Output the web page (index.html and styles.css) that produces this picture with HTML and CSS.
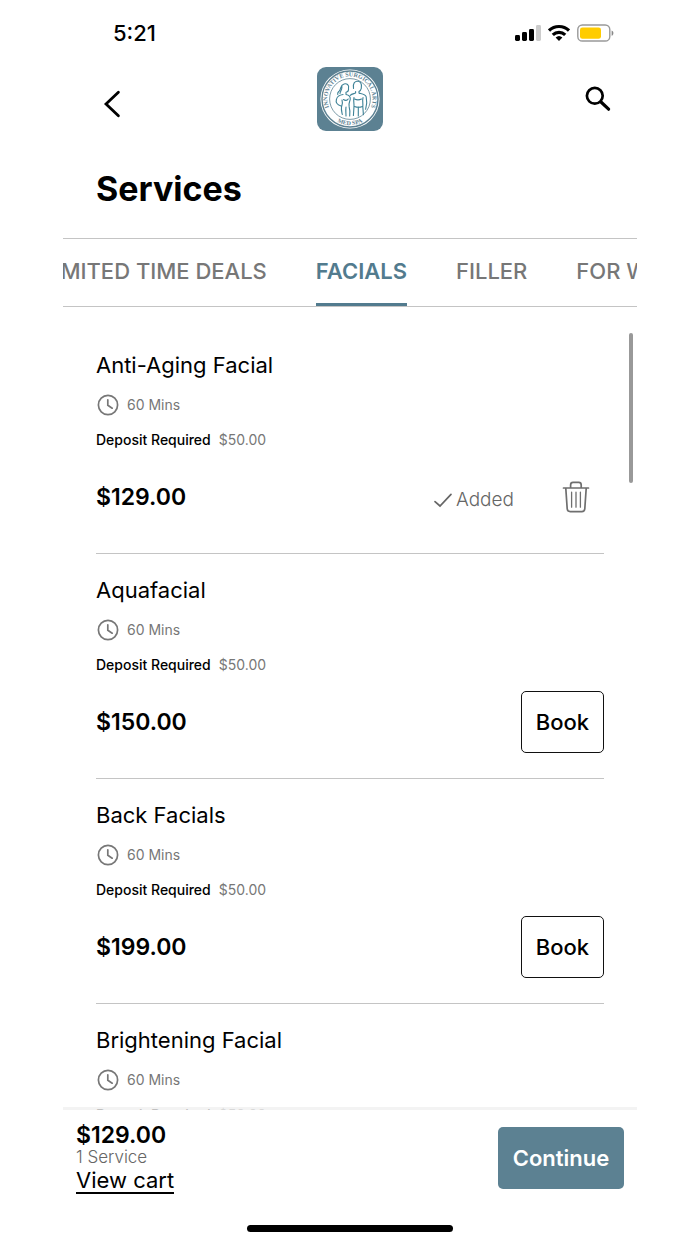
FILE: index.html
```html
<!DOCTYPE html>
<html lang="en">
<head>
<meta charset="utf-8">
<meta name="viewport" content="width=device-width, initial-scale=1">
<title>Services</title>
<link rel="stylesheet" href="styles.css">
</head>
<body>
<svg class="sprite" aria-hidden="true">
  <symbol id="clock" viewBox="0 0 22 22"><g fill="none" stroke="#777" stroke-width="1.7" stroke-linecap="round"><circle cx="11" cy="11" r="9.6"/><path d="M10.8 5.8v5.4l4.4 3"/></g></symbol>
</svg>
<div class="app">
  <div class="status">
    <span class="time">5:21</span>
    <div class="signals">
      <svg width="26" height="18" viewBox="0 0 26 18" aria-hidden="true"><rect x="0" y="11" width="5" height="6" rx="1.4"/><rect x="7" y="8" width="5" height="9" rx="1.4"/><rect x="14" y="5" width="5" height="12" rx="1.4"/><rect x="21" y="1" width="5" height="16" rx="1.4" fill="#ccc"/></svg>
      <svg width="22" height="18" viewBox="0 0 22 18" aria-hidden="true"><g fill="none" stroke="#000" stroke-width="3.2"><path d="M1 6.6a14.3 14.3 0 0 1 20 0"/><path d="M4.8 10.8a9 9 0 0 1 12.4 0"/></g><path d="M7.6 13.6a5 5 0 0 1 6.8 0L11 17z"/></svg>
      <svg width="37" height="18" viewBox="0 0 37 18" aria-hidden="true"><rect x=".8" y="1" width="32" height="16" rx="4.6" fill="#fff" stroke="#999" stroke-width="1.4"/><rect x="3" y="3.4" width="21" height="11.4" rx="2.4" fill="#fc0"/><path d="M34.6 6.4c2.4.8 2.4 4.6 0 5.4z" fill="#888"/></svg>
    </div>
  </div>

  <header class="header">
    <button class="icon-button back" aria-label="Back"><svg width="18" height="28" viewBox="0 0 18 28"><path d="M15.4 2.200 3 14l12.400 11.800" fill="none" stroke="#000" stroke-width="2.800" stroke-linecap="round"/></svg></button>
    <svg class="logo" viewBox="0 0 66 64" role="img" aria-label="Innovative Surgical Arts Med Spa">
      <defs><path id="ring-top" d="M14.8 45.4A22.6 22.6 0 1 1 51.2 45.4"/><path id="ring-bottom" d="M14.500 50.500A26.200 26.200 0 0 0 51.500 50.500"/></defs>
      <rect width="66" height="64" rx="9" fill="#5c8192"/>
      <circle cx="33" cy="32" r="29.6" fill="#fff"/>
      <circle cx="33" cy="32" r="28" fill="none" stroke="#5c8192" stroke-width="1.4"/>
      <circle cx="33" cy="32" r="20.4" fill="none" stroke="#5c8192" stroke-width=".8"/>
      <text class="seal"><textPath href="#ring-top" startOffset="50%" text-anchor="middle">INNOVATIVE SURGICAL ARTS</textPath></text>
      <text class="seal"><textPath href="#ring-bottom" startOffset="50%" text-anchor="middle">MED SPA</textPath></text>
      <g fill="none" stroke="#3e8297" stroke-width="1.1" stroke-linecap="round" stroke-linejoin="round">
        <path d="M36.5 21.5c-1-5.5 1.5-7.2 4-7.2s4.8 1.8 3.8 7c-.4 1.6-1.3 2.6-2.3 3.2v1.6c3 .8 6.400 1 7.200 3.800.8 3.600.8 8-.6 12.400M38.600 24.500v1.600c-2 .7-4 .8-5.400 2.200M46 30.600c-.8 3 .2 6-.2 9l.6 8M37 30.500c-.8 3 .2 6 0 9l-.6 9M41.300 40v9"/>
        <path d="M37.5 32c2 1 5 1 7 0M37.5 39.5c2.500 1 5.500 1 8 0"/>
        <path d="M31.5 21.3c1-3.500-2-5.300-4.500-4.300-3.500 1.200-3 4-4.200 6.200-1 2-2.800 1.800-2 4.300M25 19.500c0 3.500-1.800 4.800-2 7M31.500 21.300c.3 2.200-.7 3.700-2.500 4v2.200c3 .5 4.600 2.500 4.200 5.200-.8 2.700-2 4-1 7.300 1 3 .8 5.500.5 9M26 27.500c-3.500.5-6 2-6.600 5-1 3.500 1.500 5.500 4.600 6.500M25 33c1 3 .2 4.500-.5 7-.5 3 .5 5.500.8 7.500M29 40c-.5 3 0 6 0 9M26.500 32.500c1.500 1.200 3.600 1.200 4.700-.5"/>
      </g>
    </svg>
    <button class="icon-button search" aria-label="Search"><svg width="26" height="26" viewBox="0 0 26 26"><g fill="none" stroke="#000"><circle cx="9.8" cy="9.8" r="7.9" stroke-width="2.700"/><path d="m16 16 7.600 7.200" stroke-width="3.200" stroke-linecap="round"/></g></svg></button>
  </header>

  <h1 class="title">Services</h1>

  <nav class="tabs" aria-label="Service categories">
    <div class="tab-track">
      <a class="tab" href="#deals">LIMITED TIME DEALS</a>
      <a class="tab active" href="#facials" aria-current="page">FACIALS</a>
      <a class="tab" href="#filler">FILLER</a>
      <a class="tab" href="#women">FOR WOMEN</a>
    </div>
  </nav>

  <main class="list">
    <article class="item">
      <h2 class="name">Anti-Aging Facial</h2>
      <p class="duration"><svg class="clock"><use href="#clock"/></svg>60 Mins</p>
      <p class="deposit"><span class="label">Deposit Required</span>$50.00</p>
      <div class="row">
        <strong class="price">$129.00</strong>
        <div class="added-group">
          <span class="added"><svg width="20" height="16" viewBox="0 0 20 16" aria-hidden="true"><path d="m2 9.6 5 4.4L18 2.4" fill="none" stroke="#666" stroke-width="1.7" stroke-linecap="round"/></svg>Added</span>
          <button class="icon-button" aria-label="Remove Anti-Aging Facial"><svg width="28" height="32" viewBox="0 0 28 32"><g fill="none" stroke="#6f6f6f" stroke-width="1.7" stroke-linecap="round" stroke-linejoin="round"><path d="M1.5 7h25M8.6 6.6V4c0-1.6.8-2.6 2.4-2.6h5.8c1.6 0 2.4 1 2.4 2.6v2.6M3.8 7.400l1.400 20.400c.1 1.800 1.200 2.800 3 2.800h11.600c1.800 0 2.900-1 3-2.800l1.400-20.400"/><path d="M9.600 11.200v15M14 11.200v15M18.400 11.200v15" stroke-width="1.300"/></g></svg></button>
        </div>
      </div>
    </article>
    <article class="item">
      <h2 class="name">Aquafacial</h2>
      <p class="duration"><svg class="clock"><use href="#clock"/></svg>60 Mins</p>
      <p class="deposit"><span class="label">Deposit Required</span>$50.00</p>
      <div class="row"><strong class="price">$150.00</strong><button class="book">Book</button></div>
    </article>
    <article class="item">
      <h2 class="name">Back Facials</h2>
      <p class="duration"><svg class="clock"><use href="#clock"/></svg>60 Mins</p>
      <p class="deposit"><span class="label">Deposit Required</span>$50.00</p>
      <div class="row"><strong class="price">$199.00</strong><button class="book">Book</button></div>
    </article>
    <article class="item">
      <h2 class="name">Brightening Facial</h2>
      <p class="duration"><svg class="clock"><use href="#clock"/></svg>60 Mins</p>
      <p class="deposit"><span class="label">Deposit Required</span>$50.00</p>
    </article>
    <div class="scroll-thumb"></div>
  </main>

  <footer class="cart">
    <div class="summary">
      <strong class="total">$129.00</strong>
      <span class="count">1 Service</span>
      <a class="view" href="#cart">View cart</a>
    </div>
    <button class="continue">Continue</button>
  </footer>
  <div class="home-indicator"></div>
</div>
</body>
</html>
```
FILE: styles.css
```css
* { box-sizing: border-box; }
body { margin: 0; background: #fff; color: #000; font-family: Inter, "Liberation Sans", sans-serif; }
h1, h2, p { margin: 0; }
button { font-family: inherit; color: inherit; cursor: pointer; }
a { color: inherit; text-decoration: none; }
svg { display: block; }
.sprite { position: absolute; width: 0; height: 0; }

.app { height: 100vh; margin: 0 9%; display: flex; flex-direction: column; overflow: hidden; }

.status { display: flex; justify-content: space-between; align-items: center; padding: 19px 23px 0 50px; }
.time { font-size: 22px; line-height: 28px; font-weight: 500; }
.signals { display: flex; gap: 7px; }

.header { display: grid; grid-template-columns: 1fr 66px 1fr; padding: 20px 26px 0; }
.logo { width: 66px; height: 64px; }
.seal { font: 700 6px "Liberation Serif", serif; fill: #5c8192; }
.icon-button { padding: 0; border: 0; background: none; }
.back { justify-self: start; align-self: end; padding: 0 14px 13px; }
.search { justify-self: end; align-self: start; padding-top: 19px; }

.title { padding: 36px 33px 27px; font-size: 34px; line-height: 44px; font-weight: 700; }

.tabs { flex: none; overflow: hidden; border: solid #c4c4c4; border-width: 1px 0; }
.tab-track { display: flex; gap: 49px; margin-left: -21px; white-space: nowrap; }
.tab { padding: 18px 0 17px; border-bottom: 3px solid transparent; font-size: 22px; line-height: 29px; font-weight: 500; color: #777; }
.active { color: #527b8e; border-color: #527b8e; font-weight: 600; }

.list { position: relative; flex: 1; min-height: 0; overflow: hidden; padding: 22px 33px 0; }
.item { padding: 22px 0 25px; border-bottom: 1px solid #c4c4c4; }
.name { font-size: 22px; line-height: 28px; font-weight: 400; }
.duration { display: flex; align-items: center; gap: 8px; margin-top: 15px; padding-left: 1px; font-size: 14px; line-height: 22px; color: #777; }
.clock { width: 22px; height: 22px; }
.deposit { display: flex; gap: 8px; margin: 14px 0 16px; font-size: 14px; line-height: 20px; color: #777; }
.label { color: #000; font-weight: 500; }
.row { display: flex; align-items: center; justify-content: space-between; min-height: 62px; }
.price { font-size: 23px; line-height: 28px; font-weight: 600; }
.book { width: 83px; height: 62px; padding: 0; border: 1px solid #111; border-radius: 5px; background: #fff; font-size: 22px; font-weight: 500; }
.added-group { display: flex; align-items: center; gap: 48px; padding-right: 14px; }
.added { display: flex; align-items: center; gap: 3px; padding-top: 5px; font-size: 19px; line-height: 24px; font-weight: 300; color: #666; }
.scroll-thumb { position: absolute; top: 26px; right: 4px; width: 4px; height: 150px; border-radius: 2px; background: #999; }

.cart { position: relative; margin-top: -3px; display: flex; align-items: flex-start; justify-content: space-between; padding: 14px 13px 0; border-top: 3px solid #f0f0f0cc; background: #fff; background-clip: padding-box; }
.summary { display: flex; flex-direction: column; align-items: flex-start; }
.total { font-size: 23px; line-height: 22px; font-weight: 600; }
.count { font-size: 17px; line-height: 22px; font-weight: 300; color: #666; }
.view { border-bottom: 2px solid #000; font-size: 22px; line-height: 24px; }
.continue { width: 126px; height: 62px; margin-top: 3px; padding: 0; border: 0; border-radius: 5px; background: #5c8192; color: #fff; font-size: 22px; font-weight: 600; }
.home-indicator { flex: none; align-self: center; width: 206px; height: 7px; margin: 31px 0 12px; border-radius: 4px; background: #000; }
```
